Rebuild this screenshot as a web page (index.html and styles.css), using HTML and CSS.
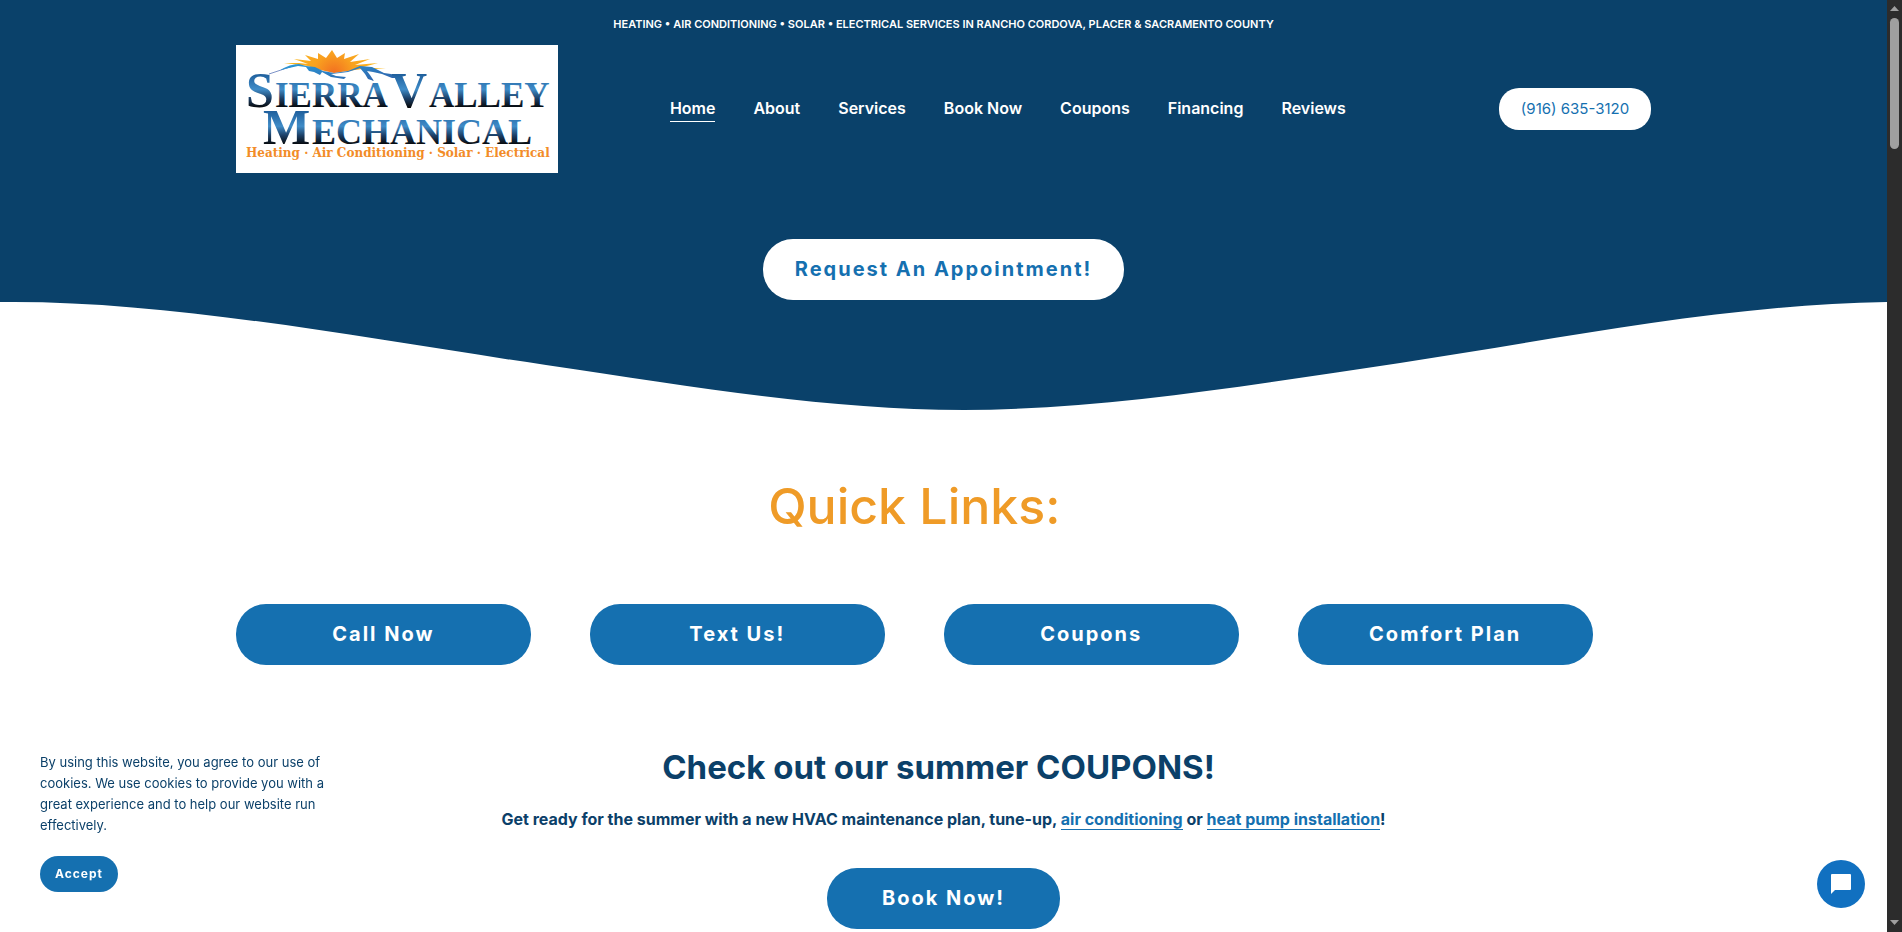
FILE: index.html
```
<!DOCTYPE html>
<html lang="en">
<head>
<meta charset="utf-8">
<meta name="viewport" content="width=device-width, initial-scale=1">
<title>Sierra Valley Mechanical</title>
<link rel="stylesheet" href="styles.css">
</head>
<body>
<div class="page">
  <div class="hero">
    <p class="announcement">HEATING • AIR CONDITIONING • SOLAR • ELECTRICAL SERVICES IN RANCHO CORDOVA, PLACER &amp; SACRAMENTO COUNTY</p>
    <header class="site-header">
      <a class="logo" href="#" aria-label="Sierra Valley Mechanical">
        <svg viewBox="0 0 322 128" width="322" height="128">
          <defs>
            <linearGradient id="ink1" gradientUnits="userSpaceOnUse" x1="0" y1="29" x2="0" y2="63">
              <stop offset="0" stop-color="#1f5f9c"/><stop offset=".45" stop-color="#3f8cc8"/><stop offset=".72" stop-color="#1c3f66"/><stop offset="1" stop-color="#050505"/>
            </linearGradient>
            <linearGradient id="ink2" gradientUnits="userSpaceOnUse" x1="0" y1="66" x2="0" y2="100">
              <stop offset="0" stop-color="#1f5f9c"/><stop offset=".45" stop-color="#3f8cc8"/><stop offset=".72" stop-color="#1c3f66"/><stop offset="1" stop-color="#050505"/>
            </linearGradient>
            <radialGradient id="sun" gradientUnits="userSpaceOnUse" cx="98" cy="28" r="44">
              <stop offset="0" stop-color="#f26f21"/>
              <stop offset=".45" stop-color="#f9a11f"/>
              <stop offset="1" stop-color="#fbb81c"/>
            </radialGradient>
            <linearGradient id="ridge" x1="0" y1="0" x2="1" y2="1">
              <stop offset="0" stop-color="#2b9bd8"/><stop offset="1" stop-color="#2f5fa8"/>
            </linearGradient>
          </defs>
          <path fill="url(#sun)" d="M48 18 63 18 72 19 58 14 75 16 69 10 82 14 82 8 90 13 96 5 101 13 109 8 108 14 123 9 114 17 134 14 119 20 142 18 127 22 150 24 126 24 112 26 98 28 80 24 72 21Z"/>
          <path fill="none" stroke="#7d93c8" d="M33 29 42 26 60 20"/>
          <path fill="url(#ridge)" d="M44 25Q54 19 63 19L70 21 79 22 87 26 98 28 112 26 124 21 136 22 148 28 155 29 162 33 156 33 146 29 137 27 131 26 134 30 138 36 132 34 129 29 124 23 112 27 104 28 95 29 100 31 110 32 108 34 95 32 86 27 84 30 78 27 73 26 70 22 62 21Z"/>
          <g font-family="'Liberation Serif', serif" font-weight="700">
            <text fill="url(#ink1)" font-size="50" y="62"><tspan x="10">S</tspan><tspan x="39" font-size="35">IERRA</tspan><tspan x="155">V</tspan><tspan x="193" font-size="35">ALLEY</tspan></text>
            <text fill="url(#ink2)" font-size="50" y="99"><tspan x="27">M</tspan><tspan x="76" font-size="36">ECHANICAL</tspan></text>
          </g>
          <text font-family="'DejaVu Serif', serif" font-weight="700" fill="#f28c28" font-size="12" x="10" y="112">Heating · Air Conditioning · Solar · Electrical</text>
        </svg>
      </a>
      <nav class="nav">
        <a class="current" href="#">Home</a>
        <a href="#">About</a>
        <a href="#">Services</a>
        <a href="#">Book Now</a>
        <a href="#">Coupons</a>
        <a href="#">Financing</a>
        <a href="#">Reviews</a>
      </nav>
      <a class="phone" href="#">(916) 635-3120</a>
    </header>
    <a class="button button-light" href="#">Request An Appointment!</a>
    <svg class="wave" viewBox="0 0 1887 112" preserveAspectRatio="none" aria-hidden="true">
      <path fill="#fff" d="M0 2C170 0 360 38 546 65C700 88 830 110 964 110C1100 110 1250 85 1400 63C1560 39 1720 5 1887 2V112H0Z"/>
    </svg>
  </div>
  <section class="quick">
    <h2>Quick Links:</h2>
    <div class="quick-grid">
      <a class="button" href="#">Call Now</a>
      <a class="button" href="#">Text Us!</a>
      <a class="button" href="#">Coupons</a>
      <a class="button" href="#">Comfort Plan</a>
    </div>
  </section>
  <section class="promo">
    <h3>Check out our summer COUPONS!</h3>
    <p>Get ready for the summer with a new HVAC maintenance plan, tune-up, <a href="#">air conditioning</a> or <a href="#">heat pump installation</a>!</p>
    <a class="button button-book" href="#">Book Now!</a>
  </section>
</div>
<div class="scrollbar" aria-hidden="true">
  <svg width="15" height="16" viewBox="0 0 15 16"><path fill="#a0a0a0" d="M3 11 7.500 6 12 11Z"/></svg>
  <div class="thumb"></div>
  <svg width="15" height="16" viewBox="0 0 15 16"><path fill="#a0a0a0" d="M3 4 12 4 7.500 9Z"/></svg>
</div>
<aside class="cookies">
  <p>By using this website, you agree to our use of cookies. We use cookies to provide you with a great experience and to help our website run effectively.</p>
  <button type="button">Accept</button>
</aside>
<button class="chat" type="button" aria-label="Open chat">
  <svg width="48" height="48" viewBox="0 0 48 48"><path fill="#fff" d="M15 14H33Q34 14 34 15V29Q34 30 33 30H18L14 34V15Q14 14 15 14Z"/></svg>
</button>
</body>
</html>
```
FILE: styles.css
```
* {
  box-sizing: border-box;
}

body {
  margin: 0;
  height: 100vh;
  overflow: hidden;
  display: flex;
  background: #fff;
  color: #0b4069;
  font-family: Inter, "Liberation Sans", sans-serif;
}

h2, h3, p {
  margin: 0;
}

a {
  text-decoration: none;
}

.page {
  flex: 1;
  min-width: 0;
  overflow: hidden;
}

.hero {
  display: flex;
  flex-direction: column;
  align-items: center;
  background: #0a416a;
}

.announcement {
  padding: 14px 0 11px;
  color: #fff;
  font-size: 11px;
  line-height: 20px;
  font-weight: 600;
}

.site-header {
  align-self: stretch;
  display: grid;
  grid-template-columns: auto 1fr auto;
  column-gap: 112px;
  align-items: center;
  padding: 0 12.5%;
}

.logo {
  background: #fff;
}

.logo svg {
  display: block;
}

.nav {
  display: flex;
  gap: 38px;
}

.nav a {
  padding-bottom: 1px;
  border-bottom: 1px solid transparent;
  color: #fff;
  font-size: 16px;
  line-height: 24px;
  font-weight: 600;
}

.nav .current {
  border-color: #fff;
}

.phone {
  padding: 11px 22px;
  border-radius: 20px;
  background: #fff;
  color: #1570b0;
  font-size: 15px;
  line-height: 20px;
}

.button {
  display: block;
  padding: 18px 32px;
  border-radius: 30px;
  background: #1570b0;
  color: #fff;
  font-size: 20px;
  line-height: 25px;
  font-weight: 700;
  letter-spacing: 2px;
  text-align: center;
}

.button-light {
  margin-top: 66px;
  background: #fff;
  color: #1570b0;
}

.wave {
  display: block;
  width: 100%;
  height: 112px;
}

.quick {
  padding: 64px 15.6% 0 12.5%;
}

.quick h2 {
  margin-bottom: 68px;
  color: #ef9b27;
  font-size: 50px;
  line-height: 60px;
  font-weight: 500;
  text-align: center;
}

.quick-grid {
  display: grid;
  grid-template-columns: repeat(4, 1fr);
  gap: 59px;
}

.promo {
  display: flex;
  flex-direction: column;
  align-items: center;
  padding-top: 82px;
  text-align: center;
}

.promo h3 {
  padding-right: 10px;
  font-size: 33px;
  line-height: 40px;
  font-weight: 700;
}

.promo p {
  margin: 18px 0 35px;
  font-size: 16px;
  line-height: 28px;
  font-weight: 700;
}

.promo p a {
  border-bottom: 1px solid #1570b0;
  color: #1570b0;
}

.button-book {
  padding: 18px 55px;
}

.scrollbar {
  display: flex;
  flex-direction: column;
  justify-content: space-between;
  align-items: center;
  width: 15px;
  background: #2c2c2c;
}

.thumb {
  width: 9px;
  height: 131px;
  margin: 2px 0 auto;
  border-radius: 5px;
  background: #9f9f9f;
}

.cookies {
  position: fixed;
  left: 40px;
  bottom: 40px;
  width: 300px;
}

.cookies p {
  margin-bottom: 20px;
  font-size: 13px;
  line-height: 21px;
}

.cookies button {
  display: block;
  padding: 8px 15px;
  border: 0;
  border-radius: 18px;
  background: #1570b0;
  color: #fff;
  font: 700 12px/20px Inter, sans-serif;
  letter-spacing: 1px;
}

.chat {
  position: fixed;
  right: 37px;
  bottom: 24px;
  width: 48px;
  height: 48px;
  padding: 0;
  border: 0;
  border-radius: 50%;
  background: #1170c0;
}

.chat svg {
  display: block;
}
```
